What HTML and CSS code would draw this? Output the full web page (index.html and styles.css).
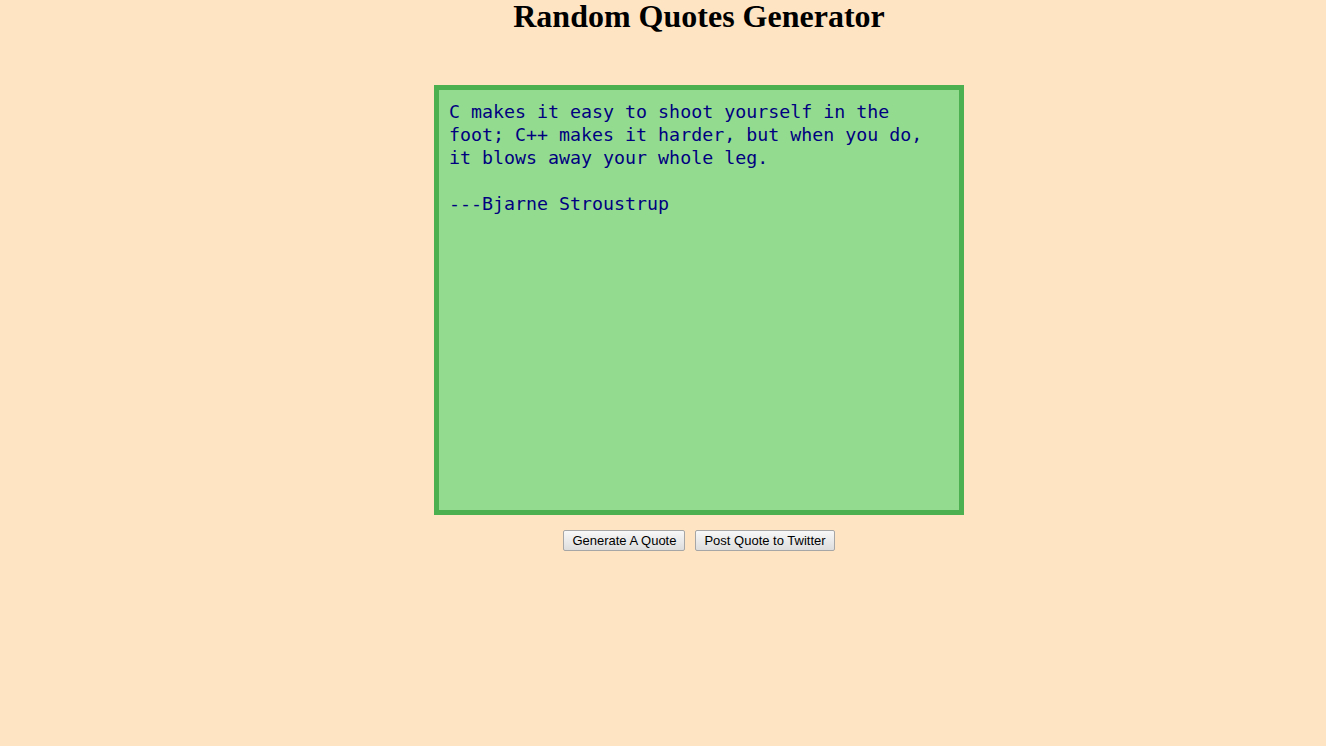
FILE: index.html
```html
<!DOCTYPE html>
<html>
<head>
<meta charset="utf-8">
<title>Random Quotes Generator</title>
<link rel="stylesheet" href="styles.css">
</head>
<body>
<div class="page">
  <h1 class="title">Random Quotes Generator</h1>
  <div class="quote-box">
    <p class="quote">C makes it easy to shoot yourself in the foot; C++ makes it harder, but when you do, it blows away your whole leg.</p>
    <p class="author">---Bjarne Stroustrup</p>
  </div>
  <div class="actions">
    <button class="btn">Generate A Quote</button>
    <button class="btn">Post Quote to Twitter</button>
  </div>
</div>
</body>
</html>
```

FILE: styles.css
```css
html, body {
  margin: 0;
  padding: 0;
  background: #ffe4c4;
}
.page {
  padding-left: 72px;
  display: flex;
  flex-direction: column;
  align-items: center;
}
.title {
  margin: 0 0 53px;
  font-family: "Liberation Serif", "Times New Roman", serif;
  font-weight: bold;
  font-size: 32px;
  line-height: 32px;
  color: #000;
}
.quote-box {
  box-sizing: border-box;
  width: 530px;
  height: 430px;
  border: 5px solid #4caf50;
  background: #93dc8f;
  padding: 10px 22px 10px 10px;
  font-family: "DejaVu Sans Mono", "Liberation Mono", monospace;
  font-size: 18.3px;
  line-height: 23px;
  color: #000080;
}
.quote {
  margin: 0 0 23px;
}
.author {
  margin: 0;
}
.actions {
  margin-top: 15px;
  display: flex;
  gap: 10px;
}
.btn {
  height: 21px;
  box-sizing: border-box;
  padding: 1px 8px;
  font-family: "Liberation Sans", Arial, sans-serif;
  font-size: 13px;
  color: #000;
  border: 1px solid #a6a6a6;
  border-radius: 2px;
  background: linear-gradient(#f8f8f8, #dddddd);
}
```
